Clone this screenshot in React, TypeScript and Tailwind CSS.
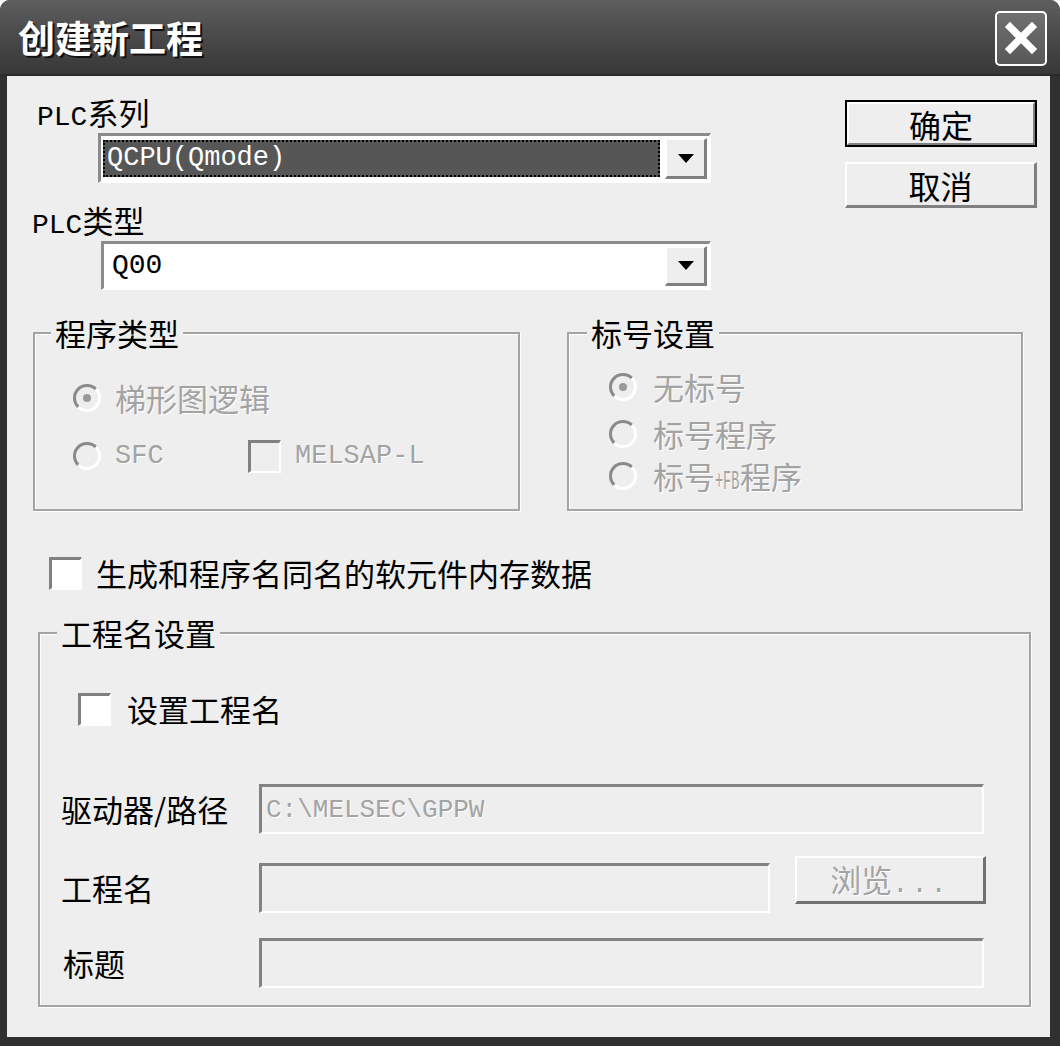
import { X } from "lucide-react";

const cjk = "font-['Noto_Sans_CJK_SC','Noto_Sans',sans-serif]";
const mono = "font-['Liberation_Mono','Noto_Sans_CJK_SC',monospace]";
const dim = "text-[#a3a3a3] [text-shadow:1px_1px_0_#ffffff]";

const Radio = ({ checked }: { checked?: boolean }) => (
  <span className="flex h-[28px] w-[28px] shrink-0 items-center justify-center rounded-full border-[3px] border-t-[#8a8a8a] border-l-[#8a8a8a] border-r-white border-b-white bg-[#eeeeee]">
    {checked && <span className="h-[8px] w-[8px] rounded-full bg-[#9a9a9a]" />}
  </span>
);

const Check = ({ disabled }: { disabled?: boolean }) => (
  <span
    className={`block h-[33px] w-[33px] shrink-0 border-t-[3px] border-l-[3px] border-r-2 border-b-2 border-t-[#808080] border-l-[#808080] border-r-white border-b-white ${
      disabled ? "bg-[#eeeeee]" : "bg-white"
    }`}
  />
);

const Arrow = () => (
  <div className="flex w-[42px] items-center justify-center border-t-2 border-l-2 border-r-[3px] border-b-[3px] border-t-white border-l-white border-r-[#808080] border-b-[#808080] bg-[#eeeeee]">
    <svg width="16" height="9" viewBox="0 0 16 9">
      <path d="M0 0h16L8 9z" fill="#000" />
    </svg>
  </div>
);

const Field = ({ className = "", children }: { className?: string; children?: React.ReactNode }) => (
  <div
    className={`flex h-[50px] items-center border-t-[3px] border-l-[3px] border-r-2 border-b-2 border-t-[#828282] border-l-[#828282] border-r-white border-b-white bg-[#eeeeee] pl-[4px] ${className}`}
  >
    {children}
  </div>
);

const Group = ({
  title,
  labelMl,
  className,
  children,
}: {
  title: string;
  labelMl: string;
  className: string;
  children: React.ReactNode;
}) => (
  <div className={`border-2 border-[#a4a4a4] shadow-[inset_1px_1px_0_#ffffff,1px_1px_0_#ffffff] ${className}`}>
    <span className={`-mt-[18px] block h-[34px] w-fit bg-[#eeeeee] px-[4px] text-[31px] leading-[34px] text-black ${labelMl}`}>
      {title}
    </span>
    {children}
  </div>
);

export default function App() {
  return (
    <div className={`flex h-[1046px] w-[1060px] flex-col overflow-hidden rounded-t-[10px] bg-[#303030] ${cjk}`}>
      {/* TITLE BAR */}
      <div className="flex h-[76px] shrink-0 items-center justify-between border-b-2 border-[#2a2a2a] bg-linear-to-b from-[#5e5e5e] via-[#494949] to-[#383838] pr-[13px] pl-[18px]">
        <h1 className="text-[37px] leading-none font-bold text-white [text-shadow:2px_2px_0_#111111]">
          创建新工程
        </h1>
        <button className="mt-[2px] flex h-[55px] w-[52px] items-center justify-center rounded-[5px] border-2 border-white bg-linear-to-b from-[#707070] to-[#585858]">
          <X size={44} strokeWidth={4} color="#ffffff" strokeLinecap="square" />
        </button>
      </div>

      {/* BODY */}
      <div className="flex min-h-0 flex-1 pr-[10px] pb-[9px] pl-[7px]">
        <div className="flex flex-1 flex-col bg-[#eeeeee] text-black">
          {/* PLC SELECTION + BUTTONS */}
          <div className="flex">
            <div className="flex w-[704px] flex-col">
              <div className="mt-[19px] ml-[30px] h-[34px] text-[31px] leading-[34px]">
                <span className={`${mono} text-[28px]`}>PLC</span>系列
              </div>
              <div className="mt-[4px] ml-[91px] flex h-[50px] w-[613px] gap-[5px] border-t-[3px] border-l-[3px] border-r-2 border-b-2 border-t-[#8c8c8c] border-l-[#8c8c8c] border-r-white border-b-white bg-white p-[2px]">
                <div className="my-[2px] flex flex-1 items-center border-2 border-dotted border-black bg-[#565656] pl-[2px]">
                  <span className={`${mono} text-[27px] leading-none text-white`}>QCPU(Qmode)</span>
                </div>
                <Arrow />
              </div>
              <div className="mt-[20px] ml-[25px] h-[34px] text-[31px] leading-[34px]">
                <span className={`${mono} text-[28px]`}>PLC</span>类型
              </div>
              <div className="mt-[4px] ml-[94px] flex h-[49px] w-[610px] gap-[5px] border-t-[3px] border-l-[3px] border-r-2 border-b-2 border-t-[#8c8c8c] border-l-[#8c8c8c] border-r-white border-b-white bg-white p-[2px]">
                <div className="flex flex-1 items-center pl-[6px]">
                  <span className={`${mono} text-[28px] leading-none`}>Q00</span>
                </div>
                <Arrow />
              </div>
            </div>

            <div className="mt-[24px] ml-[134px] flex flex-col">
              <button className="h-[47px] w-[192px] border-2 border-black">
                <div className="flex h-full items-center justify-center border-t-2 border-l-2 border-r-2 border-b-2 border-t-white border-l-white border-r-[#808080] border-b-[#808080] text-[32px] leading-none">
                  确定
                </div>
              </button>
              <button className="mt-[15px] flex h-[46px] w-[192px] items-center justify-center border-t-2 border-l-2 border-r-[3px] border-b-[3px] border-t-white border-l-white border-r-[#808080] border-b-[#808080] text-[32px] leading-none">
                取消
              </button>
            </div>
          </div>

          {/* PROGRAM TYPE / LABEL SETTINGS */}
          <div className="mt-[42px] flex">
            <Group title="程序类型" labelMl="ml-[16px]" className="ml-[26px] h-[179px] w-[487px]">
              <div className={`mt-[31px] ml-[38px] flex h-[34px] items-center gap-[14px] text-[31px] ${dim}`}>
                <Radio checked />
                <span>梯形图逻辑</span>
              </div>
              <div className={`mt-[24px] ml-[38px] flex h-[34px] items-center ${dim}`}>
                <Radio />
                <span className={`${mono} ml-[14px] w-[133px] text-[27px]`}>SFC</span>
                <Check disabled />
                <span className={`${mono} ml-[14px] text-[27px]`}>MELSAP-L</span>
              </div>
            </Group>

            <Group title="标号设置" labelMl="ml-[18px]" className="ml-[47px] h-[179px] w-[456px]">
              <div className={`mt-[20px] ml-[40px] flex h-[34px] items-center gap-[16px] text-[31px] ${dim}`}>
                <Radio checked />
                <span>无标号</span>
              </div>
              <div className={`mt-[13px] ml-[40px] flex h-[34px] items-center gap-[16px] text-[31px] ${dim}`}>
                <Radio />
                <span>标号程序</span>
              </div>
              <div className={`mt-[8px] ml-[40px] flex h-[34px] items-center gap-[16px] text-[31px] ${dim}`}>
                <Radio />
                <span className="block h-[34px] leading-[34px]">
                  标号
                  <span className="inline-block w-[25px]">
                    <span className={`${mono} inline-block origin-left scale-x-50 text-[27px]`}>+FB</span>
                  </span>
                  程序
                </span>
              </div>
            </Group>
          </div>

          {/* DEVICE MEMORY CHECKBOX */}
          <div className="mt-[45px] ml-[42px] flex h-[34px] items-center gap-[14px] text-[31px]">
            <Check />
            <span>生成和程序名同名的软元件内存数据</span>
          </div>

          {/* PROJECT NAME SETTINGS */}
          <Group title="工程名设置" labelMl="ml-[17px]" className="mt-[42px] ml-[31px] h-[375px] w-[993px]">
            <div className="mt-[42px] ml-[38px] flex h-[34px] items-center gap-[16px] text-[31px]">
              <Check />
              <span>设置工程名</span>
            </div>

            <div className="mt-[58px] ml-[21px] flex h-[50px] items-center text-[31px]">
              <span className="w-[198px]">驱动器/路径</span>
              <Field className="w-[725px]">
                <span className={`${mono} text-[26px] leading-none ${dim}`}>C:\MELSEC\GPPW</span>
              </Field>
            </div>

            <div className="mt-[29px] ml-[21px] flex h-[50px] items-center text-[31px]">
              <span className="w-[198px]">工程名</span>
              <Field className="w-[511px]" />
              <button
                className={`ml-[25px] -mt-[17px] flex h-[48px] w-[191px] items-center justify-center border-t-2 border-l-2 border-r-[3px] border-b-[3px] border-t-white border-l-white border-r-[#707070] border-b-[#707070] text-[31px] ${dim}`}
              >
                <span className="block h-[34px] leading-[34px]">
                  浏览<span className={`${mono} text-[27px] tracking-[3px]`}>...</span>
                </span>
              </button>
            </div>

            <div className="mt-[25px] ml-[21px] flex h-[50px] items-center text-[31px]">
              <span className="w-[198px] pl-[2px]">标题</span>
              <Field className="w-[725px]" />
            </div>
          </Group>
        </div>
      </div>
    </div>
  );
}
